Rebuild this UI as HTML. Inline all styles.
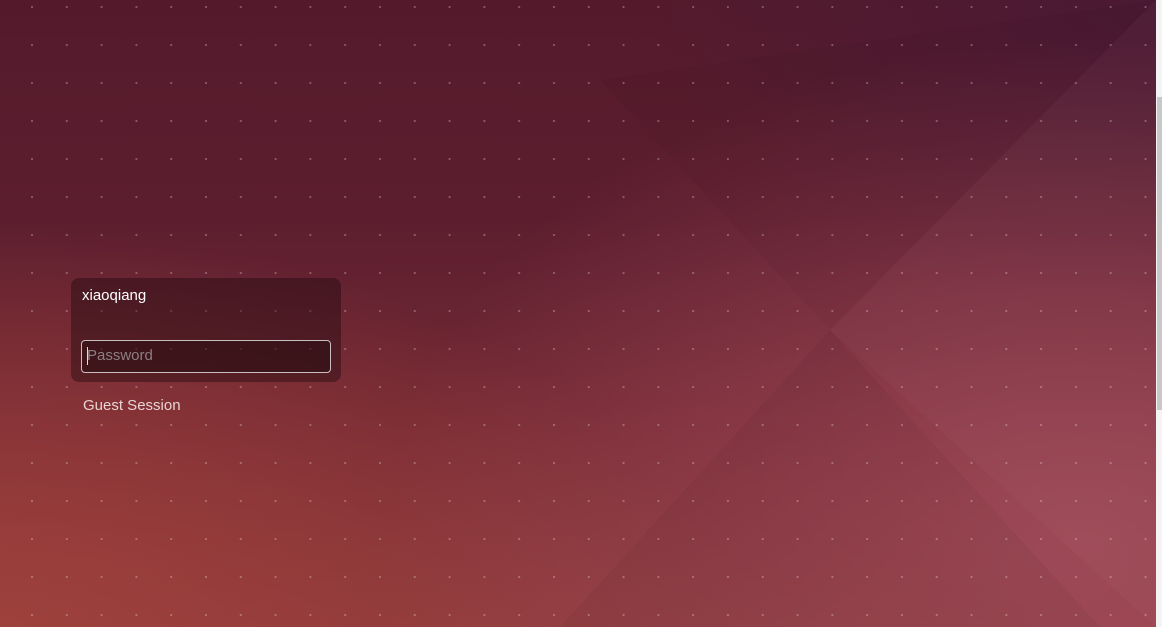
<!DOCTYPE html>
<html><head><style>
html,body{margin:0;padding:0}
body{width:1162px;height:627px;overflow:hidden;position:relative;font-family:"Liberation Sans",sans-serif;background:#5a1d2e}
#bg{position:absolute;left:0;top:0;width:1156px;height:627px;
background:
radial-gradient(ellipse 700px 500px at 1080px 540px,rgba(165,78,95,0.8),rgba(165,78,95,0) 100%),
radial-gradient(ellipse 500px 300px at 1150px 0px,rgba(70,25,55,0.7),rgba(70,25,55,0) 100%),
radial-gradient(ellipse 700px 400px at 0px 627px,rgba(160,65,60,0.9),rgba(160,65,60,0) 100%),
linear-gradient(180deg,#541a2c 0%,#5c1e2f 35%,#772b34 70%,#8c3a3c 100%);}
#dots{position:absolute;left:0;top:0;width:1156px;height:627px;
background-image:radial-gradient(circle at 1px 1px,rgba(255,255,255,0.28) 0.9px,transparent 1.3px);
background-size:34.8px 38px;background-position:31px 6px;}
#sb{position:absolute;left:1156px;top:0;width:6px;height:627px;background:#f4f4f4}
#thumb{position:absolute;left:1157px;top:97px;width:5px;height:313px;background:#c8c8c8}
#panel{position:absolute;left:71px;top:278px;width:270px;height:104px;border-radius:8px;background:rgba(20,5,10,0.38)}
#name{position:absolute;left:82px;top:287px;color:#fff;font-size:15px}
#inp{position:absolute;left:81px;top:340px;width:248px;height:31px;border:1px solid #c9bfc0;border-radius:4px;background:rgba(20,5,8,0.35)}
#ph{position:absolute;left:87px;top:347px;color:#8d7f82;font-size:15px}
#cur{position:absolute;left:87px;top:347px;width:1px;height:18px;background:#ddd}
#guest{position:absolute;left:83px;top:397px;color:#e8d4d4;font-size:15px}
</style></head><body>
<div id="bg"></div>
<svg style="position:absolute;left:0;top:0" width="1156" height="627">
<polygon points="830,330 1156,0 1156,627" fill="rgba(255,255,255,0.025)"/>
<polygon points="830,330 560,627 1100,627" fill="rgba(0,0,0,0.04)"/>
<polygon points="830,330 600,80 1156,0" fill="rgba(0,0,0,0.03)"/>
</svg>
<div id="dots"></div>
<div id="sb"></div><div id="thumb"></div>
<div id="panel"></div>
<div id="name">xiaoqiang</div>
<div id="inp"></div>
<div id="ph">Password</div><div id="cur"></div>
<div id="guest">Guest Session</div>
</body></html>
